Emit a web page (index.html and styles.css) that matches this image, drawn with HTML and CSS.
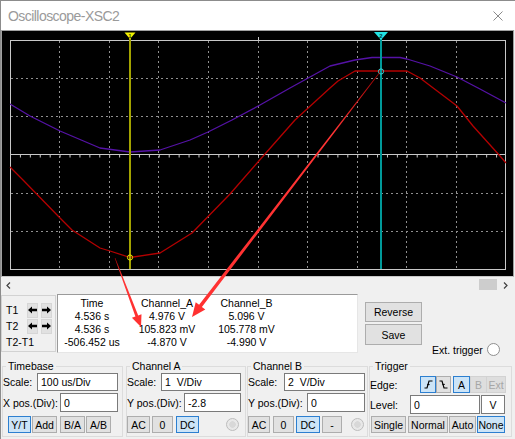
FILE: index.html
```html
<!DOCTYPE html>
<html>
<head>
<meta charset="utf-8">
<title>Oscilloscope-XSC2</title>
<link rel="stylesheet" href="styles.css">
</head>
<body>
<div class="window">
  <div class="titlebar">
    <span class="title">Oscilloscope-XSC2</span>
    <svg class="close" width="10" height="10" viewBox="0 0 10 10"><path d="M0.5 0.5 L9.5 9.5 M9.5 0.5 L0.5 9.5" stroke="#8a8a8a" stroke-width="1" fill="none"/></svg>
  </div>

  <div class="scope">
    <svg class="screen" width="510" height="245" viewBox="2 31 510 245">
      <rect x="2" y="31" width="510" height="245" fill="#000"/>
      <g stroke="#8f8f8f" stroke-width="1" stroke-dasharray="2 3" fill="none">
        <line x1="59.5" y1="41" x2="59.5" y2="269"/>
        <line x1="109.5" y1="41" x2="109.5" y2="269"/>
        <line x1="158.5" y1="41" x2="158.5" y2="269"/>
        <line x1="208.5" y1="41" x2="208.5" y2="269"/>
        <line x1="258.5" y1="41" x2="258.5" y2="269"/>
        <line x1="307.5" y1="41" x2="307.5" y2="269"/>
        <line x1="357.5" y1="41" x2="357.5" y2="269"/>
        <line x1="406.5" y1="41" x2="406.5" y2="269"/>
        <line x1="456.5" y1="41" x2="456.5" y2="269"/>
        <line x1="11" y1="78.5" x2="506" y2="78.5"/>
        <line x1="11" y1="116.5" x2="506" y2="116.5"/>
        <line x1="11" y1="193.5" x2="506" y2="193.5"/>
        <line x1="11" y1="231.5" x2="506" y2="231.5"/>
      </g>
      <rect x="10.5" y="40.5" width="495" height="229" fill="none" stroke="#c8c8c8" stroke-width="1"/>
      <line x1="10" y1="154.5" x2="506" y2="154.5" stroke="#c8c8c8" stroke-width="1"/>
      <line x1="10" y1="156" x2="506" y2="156" stroke="#c8c8c8" stroke-width="3" stroke-dasharray="1 8.92"/>
      <line x1="258.5" y1="37" x2="258.5" y2="40" stroke="#c8c8c8" stroke-width="1"/>

      <polyline fill="none" stroke="#5512a6" stroke-width="1.3" stroke-linejoin="round"
        points="10,104 30,116 60,131 100,148 130,152 160,150 190,140 208,132 232,120 260,105 290,88 330,66 355,60 372,57.5 400,57.5 407,59 430,66 457,77 480,89 506,103"/>
      <polyline fill="none" stroke="#b40000" stroke-width="1.3" stroke-linejoin="round"
        points="10,167 23,180 60,218 72,230 100,248 110,251 130,257.5 160,253 192,233 230,194 265,154 295,120 330,88 338,81 355,71 407,71 420,78 457,106 473,126 500,156 506,163"/>

      <line x1="130" y1="37" x2="130" y2="269" stroke="#a3a300" stroke-width="2"/>
      <line x1="381" y1="37" x2="381" y2="269" stroke="#009a9a" stroke-width="2"/>
      <polygon points="124.5,32.5 135.5,32.5 130,39" fill="#f2f200"/>
      <text x="130" y="37.6" font-size="6" font-family="Liberation Sans, sans-serif" font-weight="bold" text-anchor="middle" fill="#404000">1</text>
      <polygon points="374,32 388,32 381,40" fill="#22e4e4"/>
      <text x="381" y="37.8" font-size="6" font-family="Liberation Sans, sans-serif" font-weight="bold" text-anchor="middle" fill="#004040">2</text>
      <circle cx="130" cy="257.5" r="2.6" fill="none" stroke="#e6e600" stroke-width="1"/>
      <circle cx="381" cy="71.5" r="2.6" fill="none" stroke="#40d0d0" stroke-width="1"/>
    </svg>
  </div>

  <div class="hscroll">
    <svg class="chev" width="5" height="7" viewBox="0 0 5 7"><polyline points="4,0.5 1,3.5 4,6.5" fill="none" stroke="#404040" stroke-width="1.2"/></svg>
    <div class="track"><div class="thumb"></div></div>
    <svg class="chev" width="5" height="7" viewBox="0 0 5 7"><polyline points="1,0.5 4,3.5 1,6.5" fill="none" stroke="#404040" stroke-width="1.2"/></svg>
  </div>

  <div class="cursors">
    <div class="tbox">
      <div class="trow">
        <span class="tlabel">T1</span>
        <button class="abtn"><svg width="9" height="8" viewBox="0 0 9 8"><polygon points="0,4 4,0.5 4,2.8 9,2.8 9,5.2 4,5.2 4,7.5" fill="#000"/></svg></button>
        <button class="abtn"><svg width="9" height="8" viewBox="0 0 9 8"><polygon points="9,4 5,0.5 5,2.8 0,2.8 0,5.2 5,5.2 5,7.5" fill="#000"/></svg></button>
      </div>
      <div class="trow">
        <span class="tlabel">T2</span>
        <button class="abtn"><svg width="9" height="8" viewBox="0 0 9 8"><polygon points="0,4 4,0.5 4,2.8 9,2.8 9,5.2 4,5.2 4,7.5" fill="#000"/></svg></button>
        <button class="abtn"><svg width="9" height="8" viewBox="0 0 9 8"><polygon points="9,4 5,0.5 5,2.8 0,2.8 0,5.2 5,5.2 5,7.5" fill="#000"/></svg></button>
      </div>
      <div class="trow trow-last"><span class="tlabel">T2-T1</span></div>
    </div>

    <div class="readout">
      <span>Time</span><span>Channel_A</span><span>Channel_B</span>
      <span>4.536 s</span><span>4.976 V</span><span>5.096 V</span>
      <span>4.536 s</span><span>105.823 mV</span><span>105.778 mV</span>
      <span>-506.452 us</span><span>-4.870 V</span><span>-4.990 V</span>
    </div>

    <div class="actions">
      <div class="btncol">
        <button class="btn btn-rev">Reverse</button>
        <button class="btn btn-save">Save</button>
      </div>
      <div class="ext">
        <span>Ext. trigger</span>
        <span class="radio"></span>
      </div>
    </div>
  </div>

  <div class="groups">
    <fieldset class="grp grp-time">
      <legend>Timebase</legend>
      <div class="row r1">
        <span class="lbl lbl-s">Scale:</span>
        <input class="field" type="text" value="100 us/Div">
      </div>
      <div class="row r2">
        <span class="lbl lbl-y">X pos.(Div):</span>
        <input class="field" type="text" value="0">
      </div>
      <div class="row r3 tb-btns">
        <button class="btn sel w23">Y/T</button>
        <button class="btn w25">Add</button>
        <button class="btn w25 gap3">B/A</button>
        <button class="btn w25">A/B</button>
      </div>
    </fieldset>

    <fieldset class="grp grp-cha">
      <legend>Channel A</legend>
      <div class="row r1">
        <span class="lbl lbl-s">Scale:</span>
        <input class="field" type="text" value="1  V/Div">
      </div>
      <div class="row r2">
        <span class="lbl lbl-y">Y pos.(Div):</span>
        <input class="field" type="text" value="-2.8">
      </div>
      <div class="row r3">
        <button class="btn w23">AC</button>
        <button class="btn w21 gap2">0</button>
        <button class="btn sel w23 gap3">DC</button>
        <span class="radio radio-dis"></span>
      </div>
    </fieldset>

    <fieldset class="grp grp-chb">
      <legend>Channel B</legend>
      <div class="row r1">
        <span class="lbl lbl-s">Scale:</span>
        <input class="field" type="text" value="2  V/Div">
      </div>
      <div class="row r2">
        <span class="lbl lbl-y">Y pos.(Div):</span>
        <input class="field" type="text" value="0">
      </div>
      <div class="row r3">
        <button class="btn w22">AC</button>
        <button class="btn w21 gap3">0</button>
        <button class="btn sel w24 gap2">DC</button>
        <button class="btn w20 gap2">-</button>
        <span class="radio radio-dis"></span>
      </div>
    </fieldset>

    <fieldset class="grp grp-trig">
      <legend>Trigger</legend>
      <div class="row t1">
        <span class="lbl lbl-edge">Edge:</span>
        <button class="btn sel ebtn w16"><svg width="9" height="9" viewBox="0 0 9 9"><path d="M0.5 8 H3 L5 1 H8.5" fill="none" stroke="#000" stroke-width="1.2"/><path d="M3.2 4.6 H5.6" stroke="#000" stroke-width="1"/></svg></button>
        <button class="btn ebtn w15"><svg width="9" height="9" viewBox="0 0 9 9"><path d="M0.5 1 H3 L5 8 H8.5" fill="none" stroke="#000" stroke-width="1.2"/><path d="M3.4 4.4 H5.8" stroke="#000" stroke-width="1"/></svg></button>
        <button class="btn sel w17 gap3">A</button>
        <button class="btn dis w17">B</button>
        <button class="btn dis w20 gap0">Ext</button>
      </div>
      <div class="row t2">
        <span class="lbl lbl-level">Level:</span>
        <input class="field field-level" type="text" value="0">
        <span class="vbox">V</span>
      </div>
      <div class="row t3">
        <button class="btn w35">Single</button>
        <button class="btn w40 gap2">Normal</button>
        <button class="btn w27">Auto</button>
        <button class="btn sel w28">None</button>
      </div>
    </fieldset>
  </div>
</div>

<svg class="annot" width="515" height="439" viewBox="0 0 515 439">
  <defs>
    <linearGradient id="ag2" x1="380" y1="72" x2="192" y2="317" gradientUnits="userSpaceOnUse">
      <stop offset="0" stop-color="#9a0000"/>
      <stop offset="0.25" stop-color="#ff3434"/>
      <stop offset="1" stop-color="#ff3030"/>
    </linearGradient>
    <linearGradient id="ag1" x1="115" y1="258" x2="141" y2="327" gradientUnits="userSpaceOnUse">
      <stop offset="0" stop-color="#b00000"/>
      <stop offset="0.3" stop-color="#ff3434"/>
      <stop offset="1" stop-color="#ff3030"/>
    </linearGradient>
  </defs>
  <polygon fill="url(#ag1)" points="114.7,258.1 135.4,316.5 131.9,317.7 141,327 141.5,314.3 138.2,315.5 115.3,257.9"/>
  <polygon fill="url(#ag2)" points="379.7,71.8 199.1,304.8 195.7,302.2 192,317 205.3,309.6 201.9,307 380.3,72.2"/>
</svg>
</body>
</html>
```

FILE: styles.css
```css
* {
  box-sizing: border-box;
}

html,
body {
  margin: 0;
  padding: 0;
}

body {
  position: relative;
  width: 515px;
  height: 439px;
  background: #f0f0f0;
  font-family: "Liberation Sans", Arial, sans-serif;
  font-size: 10.5px;
  color: #000;
  overflow: hidden;
}

.window {
  width: 515px;
  height: 439px;
  border-left: 1px solid #8c8c8c;
  border-top: 1px solid #8c8c8c;
  background: #f0f0f0;
}

/* title bar */
.titlebar {
  height: 29px;
  background: #fff;
  display: flex;
  align-items: center;
  justify-content: space-between;
  padding: 0 12px 0 7px;
}

.title {
  font-size: 14px;
  color: #9a9a9a;
  letter-spacing: -0.55px;
}

.close {
  display: block;
}

/* scope screen */
.scope {
  height: 247px;
  margin-right: 1px;
  border: 1px solid #a0a0a0;
  border-bottom-color: #c8c8c8;
  background: #000;
}

.screen {
  display: block;
}

/* horizontal scroll bar */
.hscroll {
  height: 17px;
  display: flex;
  align-items: center;
  padding: 0 7px 0 5px;
}

.chev {
  display: block;
  flex: none;
}

.track {
  flex: 1;
  display: flex;
  justify-content: flex-end;
  align-self: flex-start;
  padding: 2px 6px 0 0;
}

.thumb {
  width: 18px;
  height: 11px;
  background: #cdcdcd;
}

/* cursor readout */
.cursors {
  height: 59px;
  display: flex;
  align-items: flex-start;
}

.tbox {
  margin-top: 1px;
  width: 55px;
  height: 57px;
  border: 1px solid #d2d2d2;
  padding: 6px 0 0 4px;
}

.trow {
  display: flex;
  align-items: center;
  height: 16px;
}

.trow-last {
  height: 15px;
}

.tlabel {
  width: 21px;
  flex: none;
  white-space: nowrap;
}

.abtn {
  width: 11px;
  height: 15px;
  padding: 0;
  margin: 0 3px 0 0;
  border: 1px solid #d6d6d6;
  background: #e1e1e1;
  display: flex;
  align-items: center;
  justify-content: center;
}

.abtn svg {
  display: block;
}

.readout {
  margin-left: 1px;
  width: 301px;
  height: 59px;
  background: #fff;
  border-style: solid;
  border-width: 1px;
  border-color: #9a9a9a #e6e6e6 #e6e6e6 #9a9a9a;
  display: grid;
  grid-template-columns: 68px 82px 77px;
  grid-auto-rows: 13px;
  align-content: start;
  padding-top: 2px;
  line-height: 13px;
  text-align: center;
  white-space: nowrap;
}

.actions {
  margin-left: 7px;
  padding-top: 8px;
  display: flex;
  align-items: flex-start;
}

.btncol {
  display: flex;
  flex-direction: column;
  gap: 2px;
}

.btn {
  font-family: inherit;
  font-size: 10.5px;
  color: #000;
  height: 17px;
  padding: 0;
  margin: 0;
  border: 1px solid #adadad;
  background: #e1e1e1;
  display: flex;
  align-items: center;
  justify-content: center;
  white-space: nowrap;
}

.btn-rev {
  width: 57px;
  height: 20px;
}

.btn-save {
  width: 57px;
  height: 21px;
}

.btn.sel {
  background: #cce4f7;
  border-color: #2c7fd0;
}

.btn.dis {
  background: #dedede;
  border-color: #d2d2d2;
  color: #a6a6a6;
}

.ext {
  margin: 41px 0 0 10px;
  display: flex;
  align-items: center;
  gap: 4px;
  white-space: nowrap;
}

.radio {
  display: block;
  width: 13px;
  height: 13px;
  border-radius: 50%;
  border: 1px solid #8f8f8f;
  background: #fff;
  flex: none;
}

.radio-dis {
  margin-left: auto;
  margin-right: 6px;
  border-color: #bdbdbd;
  background: radial-gradient(circle, #d8d8d8 0 3px, #e8e8e8 3.5px);
}

.grp-chb .radio-dis {
  margin-right: 3px;
}

/* group boxes */
.groups {
  display: flex;
  margin-top: 7px;
  padding-left: 1px;
}

.grp {
  margin: 0;
  padding: 0;
  height: 77px;
  border: 1px solid #dcdcdc;
  min-width: 0;
}

.grp legend {
  padding: 0 2px;
  margin-left: 3px;
  font-size: 10.5px;
  line-height: 12px;
}

.grp-time {
  width: 121px;
}

.grp-cha {
  width: 120px;
  margin-left: 3px;
}

.grp-chb {
  width: 121px;
  margin-left: 1px;
}

.grp-trig {
  width: 143px;
  margin-left: 1px;
}

.row {
  display: flex;
  align-items: center;
}

.r1 {
  margin-top: 1px;
  height: 18px;
}

.r2 {
  margin-top: 2px;
  height: 19px;
}

.r3 {
  margin-top: 4px;
  height: 17px;
  gap: 1px;
}

.t1 {
  margin-top: 4px;
  height: 17px;
}

.t2 {
  margin-top: 2px;
  height: 19px;
}

.t3 {
  margin-top: 2px;
  height: 17px;
  padding-left: 1px;
  gap: 1px;
}

.lbl {
  flex: none;
  white-space: nowrap;
}

.lbl-s {
  width: 34px;
}

.lbl-y {
  width: 57px;
}

.grp-chb .lbl-s {
  width: 36px;
}

.grp-chb .lbl-y {
  width: 59px;
}

.lbl-edge {
  width: 50px;
}

.lbl-level {
  width: 40px;
}

.field {
  flex: 1;
  min-width: 0;
  height: 100%;
  margin: 0 4px 0 0;
  padding: 0 0 0 3px;
  border: 1px solid #7a7a7a;
  background: #fff;
  font-family: inherit;
  font-size: 10.5px;
  color: #000;
  outline: none;
}

.grp-chb .field {
  margin-right: 2px;
}

.field-level {
  flex: none;
  width: 70px;
  margin: 0;
}

.vbox {
  margin-left: 1px;
  width: 24px;
  height: 100%;
  border: 1px solid #7a7a7a;
  background: #fff;
  display: flex;
  align-items: center;
  justify-content: center;
}

.tb-btns {
  padding-left: 5px;
}

.ebtn svg {
  display: block;
}

.gap0 { margin-left: -1px; }
.gap2 { margin-left: 1px; }
.gap3 { margin-left: 2px; }

.w15 { width: 15px; }
.w16 { width: 16px; }
.w17 { width: 17px; }
.w20 { width: 20px; }
.w21 { width: 21px; }
.w22 { width: 22px; }
.w23 { width: 23px; }
.w24 { width: 24px; }
.w25 { width: 25px; }
.w27 { width: 27px; }
.w28 { width: 28px; }
.w35 { width: 35px; }
.w40 { width: 40px; }

/* annotation arrows lying over the screen and readout */
.annot {
  position: absolute;
  left: 0;
  top: 0;
  pointer-events: none;
}
```
